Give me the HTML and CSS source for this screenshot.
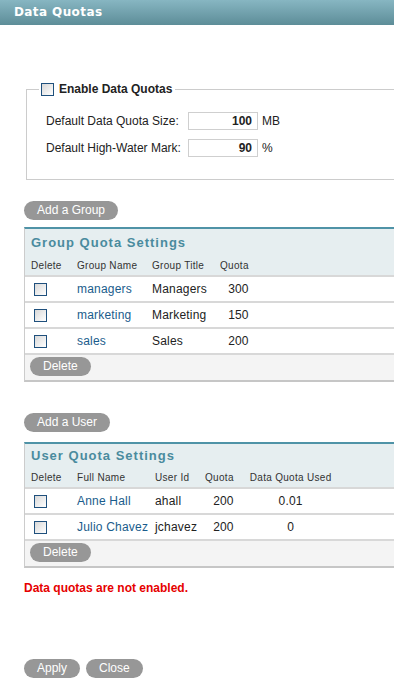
FILE: index.html
```html
<!DOCTYPE html>
<html lang="en">
<head>
  <meta charset="UTF-8" />
  <meta name="viewport" content="width=device-width, initial-scale=1.0" />
  <title>Data Quotas</title>
  <link rel="stylesheet" href="styles.css">
</head>
<body>

  <!-- Title bar -->
  <div class="titlebar">
    <h1>Data Quotas</h1>
  </div>

  <div class="page">

    <!-- Defaults -->
    <fieldset class="defaults">
      <legend>
        <label><input type="checkbox" class="box"> Enable Data Quotas</label>
      </legend>
      <div class="defaults-grid">
        <label for="quotaSize">Default Data Quota Size:</label>
        <input type="text" id="quotaSize" class="num" value="100">
        <span class="unit">MB</span>

        <label for="highWater">Default High-Water Mark:</label>
        <input type="text" id="highWater" class="num" value="90">
        <span class="unit">%</span>
      </div>
    </fieldset>

    <!-- Groups -->
    <button class="pill add-btn">Add a Group</button>
    <div class="panel">
      <div class="panel-title">Group Quota Settings</div>
      <table class="grid">
        <thead>
          <tr>
            <th class="g-del">Delete</th>
            <th class="g-name">Group Name</th>
            <th class="g-title">Group Title</th>
            <th class="g-quota">Quota</th>
            <th></th>
          </tr>
        </thead>
        <tbody>
          <tr>
            <td><input type="checkbox" class="box"></td>
            <td><a href="#">managers</a></td>
            <td>Managers</td>
            <td class="g-quota">300</td>
            <td></td>
          </tr>
          <tr>
            <td><input type="checkbox" class="box"></td>
            <td><a href="#">marketing</a></td>
            <td>Marketing</td>
            <td class="g-quota">150</td>
            <td></td>
          </tr>
          <tr>
            <td><input type="checkbox" class="box"></td>
            <td><a href="#">sales</a></td>
            <td>Sales</td>
            <td class="g-quota">200</td>
            <td></td>
          </tr>
        </tbody>
      </table>
      <div class="panel-foot">
        <button class="pill">Delete</button>
      </div>
    </div>

    <!-- Users -->
    <button class="pill add-btn add-user">Add a User</button>
    <div class="panel user-panel">
      <div class="panel-title">User Quota Settings</div>
      <table class="grid">
        <thead>
          <tr>
            <th class="u-del">Delete</th>
            <th class="u-name">Full Name</th>
            <th class="u-id">User Id</th>
            <th class="u-quota">Quota</th>
            <th class="u-used">Data Quota Used</th>
            <th></th>
          </tr>
        </thead>
        <tbody>
          <tr>
            <td><input type="checkbox" class="box"></td>
            <td><a href="#">Anne Hall</a></td>
            <td>ahall</td>
            <td class="u-quota">200</td>
            <td class="u-used">0.01</td>
            <td></td>
          </tr>
          <tr>
            <td><input type="checkbox" class="box"></td>
            <td><a href="#">Julio Chavez</a></td>
            <td>jchavez</td>
            <td class="u-quota">200</td>
            <td class="u-used">0</td>
            <td></td>
          </tr>
        </tbody>
      </table>
      <div class="panel-foot">
        <button class="pill">Delete</button>
      </div>
    </div>

    <p class="error">Data quotas are not enabled.</p>

    <div class="actions">
      <button class="pill">Apply</button>
      <button class="pill">Close</button>
    </div>
  </div>

</body>
</html>
```

FILE: styles.css
```css
html, body {
  overflow: hidden;
}

body {
  margin: 0;
  font-family: "Liberation Sans", Arial, sans-serif;
  font-size: 12px;
  color: #222;
  background: #fff;
}

/* Title bar */
.titlebar {
  height: 25px;
  background: linear-gradient(#87b6c2, #5d8d98);
}

.titlebar h1 {
  margin: 0;
  padding-left: 14px;
  font: bold 12px/25px "DejaVu Sans", Verdana, sans-serif;
  letter-spacing: 0.4px;
  color: #fff;
}

.page {
  padding-left: 24px;
}

/* Checkboxes */
.box {
  -webkit-appearance: none;
  appearance: none;
  width: 13px;
  height: 13px;
  margin: 0;
  border: 1px solid #1f507d;
  background: linear-gradient(135deg, #d8d8d8, #fff);
  vertical-align: middle;
}

/* Defaults fieldset */
.defaults {
  margin: 56px -20px 0 2px;
  padding: 0 0 22px 12px;
  border: 1px solid #ccc;
}

.defaults legend {
  padding: 0 3px 0 2px;
  font-weight: bold;
  line-height: 16px;
}

.defaults legend label {
  display: flex;
  align-items: center;
  gap: 5px;
}

.defaults-grid {
  display: grid;
  grid-template-columns: 142px 70px auto;
  row-gap: 9px;
  align-items: center;
  margin: 15px 0 0 7px;
}

.num {
  box-sizing: border-box;
  width: 70px;
  height: 18px;
  padding: 0 5px;
  border: 1px solid #cfcfcf;
  font: bold 12px "Liberation Sans", Arial, sans-serif;
  color: #222;
  text-align: right;
}

.unit {
  margin-left: 4px;
}

/* Pill buttons */
.pill {
  display: inline-block;
  height: 19px;
  padding: 0 13px;
  border: none;
  border-radius: 10px;
  background: #979797;
  color: #fff;
  font: 12px/19px "Liberation Sans", Arial, sans-serif;
  cursor: pointer;
}

.add-btn {
  display: block;
  margin-top: 21px;
}

.add-user {
  margin-top: 31px;
}

/* Panels */
.panel {
  margin: 7px -20px 0 0;
  border-top: 2px solid #4f93a7;
  border-left: 1px solid #ccc;
  border-bottom: 2px solid #c6c6c6;
}

.panel-title {
  height: 26px;
  padding-left: 6px;
  background: #e6eef0;
  color: #4a8b9e;
  font-weight: bold;
  font-size: 13px;
  line-height: 27px;
  letter-spacing: 1px;
}

.user-panel {
  margin-top: 10px;
}

.user-panel .panel-title {
  height: 23px;
  line-height: 23px;
}

.grid {
  width: 100%;
  border-collapse: separate;
  border-spacing: 0;
}

.grid th {
  height: 20px;
  padding: 0 0 0 6px;
  background: #e6eef0;
  border-bottom: 2px solid #d8d8d8;
  font-size: 10px;
  font-weight: normal;
  letter-spacing: 0.3px;
  color: #333;
  text-align: left;
  white-space: nowrap;
}

.grid td {
  height: 24px;
  padding: 0 0 0 6px;
  border-bottom: 2px solid #d8d8d8;
  letter-spacing: 0.2px;
  white-space: nowrap;
}

.grid td .box {
  margin-left: 3px;
}

.grid a {
  color: #1a5c8c;
  text-decoration: none;
}

/* group columns */
.g-del { width: 40px; }
.g-name { width: 69px; }
.g-title { width: 62px; }
.grid .g-quota {
  width: 28px;
  padding-right: 2px;
  text-align: right;
}

/* user columns */
.u-del { width: 40px; }
.u-name { width: 72px; }
.u-id { width: 44px; }
.grid .u-quota {
  width: 28px;
  padding-right: 10px;
  text-align: right;
}
.grid .u-used {
  width: 81px;
  text-align: center;
}

.panel-foot {
  height: 25px;
  padding: 2px 0 0 5px;
  box-sizing: border-box;
  background: #f4f4f4;
}

.error {
  margin: 13px 0 0;
  color: #e60000;
  font-weight: bold;
}

.actions {
  display: flex;
  gap: 6px;
  margin-top: 64px;
}
```
